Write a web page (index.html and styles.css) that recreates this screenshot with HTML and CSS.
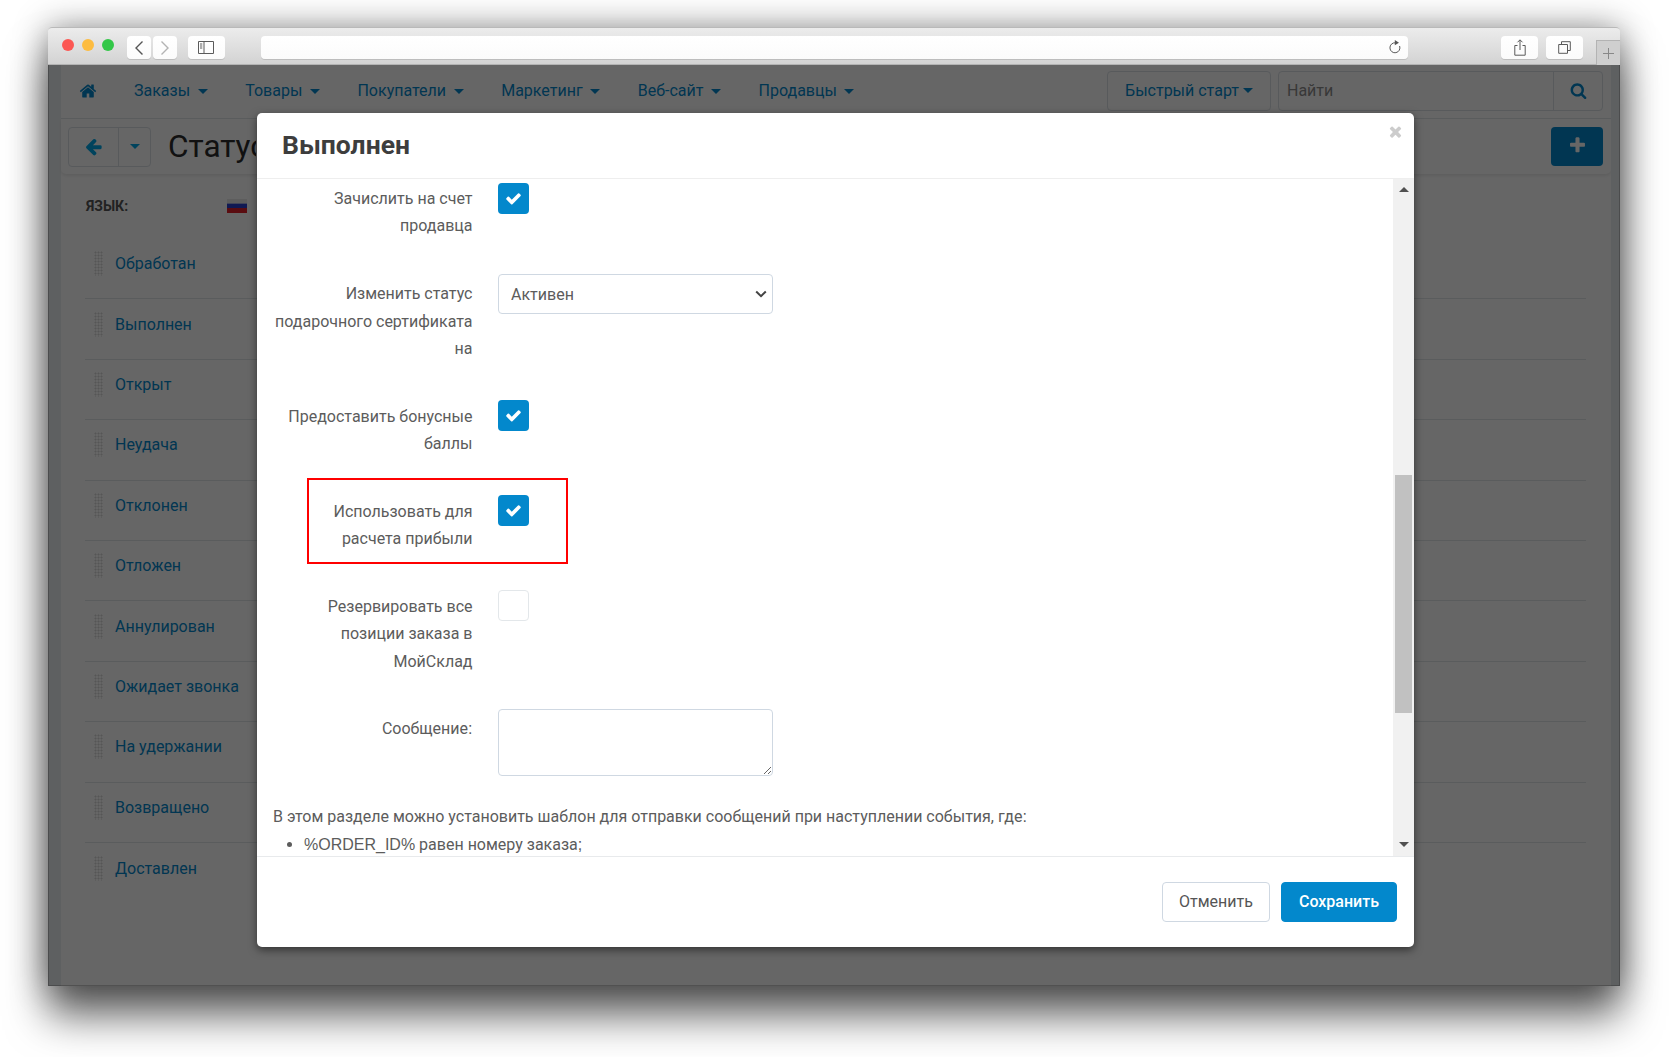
FILE: index.html
```html
<!DOCTYPE html>
<html lang="ru">
<head>
<meta charset="utf-8">
<title>Выполнен</title>
<link rel="stylesheet" href="styles.css">
</head>
<body>
<svg class="defs" width="0" height="0" aria-hidden="true">
  <symbol id="i-home" viewBox="0 0 1792 1792"><path d="M1472 992v480q0 26-19 45t-45 19h-384v-384h-256v384h-384q-26 0-45-19t-19-45v-480q0-1 .5-3t.5-3l575-474 575 474q1 2 1 6zm223-69l-62 74q-8 9-21 11h-3q-13 0-21-7l-692-577-692 577q-12 8-24 7-13-2-21-11l-62-74q-8-10-7-23.5t11-21.5l719-599q32-26 76-26t76 26l244 204v-195q0-14 9-23t23-9h192q14 0 23 9t9 23v408l219 182q10 8 11 21.5t-7 23.5z"/></symbol>
  <symbol id="i-left" viewBox="0 0 1792 1792"><path d="M1664 896v128q0 53-32.5 90.5t-84.5 37.5h-704l293 294q38 36 38 90t-38 90l-75 76q-37 37-90 37-52 0-91-37l-651-652q-37-37-37-90 0-52 37-91l651-650q38-38 91-38 52 0 90 38l75 74q38 38 38 91t-38 91l-293 293h704q52 0 84.5 37.5t32.5 90.5z"/></symbol>
  <symbol id="i-search" viewBox="0 0 1792 1792"><path d="M1216 832q0-185-131.5-316.5t-316.5-131.5-316.5 131.5-131.5 316.5 131.5 316.5 316.5 131.5 316.5-131.5 131.5-316.5zm512 832q0 52-38 90t-90 38q-54 0-90-38l-343-342q-179 124-399 124-143 0-273.5-55.5t-225-150-150-225-55.5-273.5 55.5-273.5 150-225 225-150 273.5-55.5 273.5 55.5 225 150 150 225 55.5 273.5q0 220-124 399l343 343q37 37 37 90z"/></symbol>
  <symbol id="i-plus" viewBox="0 0 1792 1792"><path d="M1600 736v192q0 40-28 68t-68 28h-416v416q0 40-28 68t-68 28h-192q-40 0-68-28t-28-68v-416h-416q-40 0-68-28t-28-68v-192q0-40 28-68t68-28h416v-416q0-40 28-68t68-28h192q40 0 68 28t28 68v416h416q40 0 68 28t28 68z"/></symbol>
  <symbol id="i-close" viewBox="0 0 1792 1792"><path d="M1490 1322q0 40-28 68l-136 136q-28 28-68 28t-68-28l-294-294-294 294q-28 28-68 28t-68-28l-136-136q-28-28-28-68t28-68l294-294-294-294q-28-28-28-68t28-68l136-136q28-28 68-28t68 28l294 294 294-294q28-28 68-28t68 28l136 136q28 28 28 68t-28 68l-294 294 294 294q28 28 28 68z"/></symbol>
  <symbol id="i-check" viewBox="0 0 1792 1792"><path d="M1671 566q0 40-28 68l-724 724-136 136q-28 28-68 28t-68-28l-136-136-362-362q-28-28-28-68t28-68l136-136q28-28 68-28t68 28l294 295 656-657q28-28 68-28t68 28l136 136q28 28 28 68z"/></symbol>
</svg>

<div class="window">
  <header class="toolbar">
    <div class="lights">
      <span class="light light-red"></span>
      <span class="light light-yellow"></span>
      <span class="light light-green"></span>
    </div>
    <div class="nav-buttons">
      <span class="tb-btn tb-nav"><svg width="12" height="16" viewBox="0 0 12 16"><path class="stroke" d="M9.5 1.5 3 8l6.5 6.5"/></svg></span>
      <span class="tb-btn tb-nav"><svg width="12" height="16" viewBox="0 0 12 16"><path class="stroke stroke-light" d="M2.5 1.5 9 8l-6.5 6.5"/></svg></span>
    </div>
    <span class="tb-btn tb-wide tb-sidebar"><svg width="16" height="13" viewBox="0 0 16 13"><path class="stroke stroke-thin" d="M.5.5h15v12H.5zM6 .5v12M2 3h2.300M2 5h2.300M2 7h2.300"/></svg></span>
    <div class="address">
      <svg width="13" height="15" viewBox="0 0 13 15"><path class="stroke stroke-thin" d="M7.500 2.800A5 5 0 1 0 11.600 6"/><path class="fill-dark" d="M6.800 0 11 2.800 6.800 5.200z"/></svg>
    </div>
    <span class="tb-btn tb-wide tb-share"><svg width="12" height="17" viewBox="0 0 12 17"><path class="stroke stroke-thin" d="M3.500 6.500H.8v9.700h10.400V6.500H8.500M6 11V1M3.500 3.300 6 .8l2.500 2.500"/></svg></span>
    <span class="tb-btn tb-wide tb-tabs"><svg width="13" height="13" viewBox="0 0 13 13"><path class="stroke stroke-thin" d="M.7 3.500h8.800v8.800H.7zM3.500 3.300V.7h8.800v8.800H9.700"/></svg></span>
    <span class="new-tab"><svg width="11" height="11" viewBox="0 0 11 11"><path class="stroke stroke-plus" d="M5.500 0v11M0 5.500h11"/></svg></span>
  </header>

  <div class="page">
    <div class="strip strip-left"></div>
    <main class="main">
      <nav class="topnav">
        <svg class="icon home"><use href="#i-home"/></svg>
        <ul class="menu">
          <li>Заказы<i class="caret"></i></li>
          <li>Товары<i class="caret"></i></li>
          <li>Покупатели<i class="caret"></i></li>
          <li>Маркетинг<i class="caret"></i></li>
          <li>Веб-сайт<i class="caret"></i></li>
          <li>Продавцы<i class="caret"></i></li>
        </ul>
        <span class="quick">Быстрый старт<i class="caret caret-tight"></i></span>
        <div class="search">
          <span class="search-text">Найти</span>
          <span class="search-btn"><svg class="icon search-icon"><use href="#i-search"/></svg></span>
        </div>
      </nav>
      <div class="subbar">
        <div class="back-group">
          <span class="back-btn"><svg class="icon back-icon"><use href="#i-left"/></svg></span>
          <span class="back-more"><i class="caret caret-flat"></i></span>
        </div>
        <h1 class="page-title">Статус</h1>
        <span class="add-btn"><svg class="icon add-icon"><use href="#i-plus"/></svg></span>
      </div>
      <div class="lang">
        <span class="lang-label">ЯЗЫК:</span>
        <span class="flag"></span>
      </div>
      <ul class="statuses">
        <li><span class="grip"></span>Обработан</li>
        <li><span class="grip"></span>Выполнен</li>
        <li><span class="grip"></span>Открыт</li>
        <li><span class="grip"></span>Неудача</li>
        <li><span class="grip"></span>Отклонен</li>
        <li><span class="grip"></span>Отложен</li>
        <li><span class="grip"></span>Аннулирован</li>
        <li><span class="grip"></span>Ожидает звонка</li>
        <li><span class="grip"></span>На удержании</li>
        <li><span class="grip"></span>Возвращено</li>
        <li><span class="grip"></span>Доставлен</li>
      </ul>
    </main>
    <div class="strip strip-right"></div>
    <div class="backdrop"></div>
    <section class="modal">
      <div class="modal-head">
        <h2 class="modal-title">Выполнен</h2>
        <svg class="icon close"><use href="#i-close"/></svg>
      </div>
      <div class="modal-body">
        <div class="scroll-content">
          <div class="row row-first">
            <label class="row-label">Зачислить на счет продавца</label>
            <span class="check"><svg class="icon tick"><use href="#i-check"/></svg></span>
          </div>
          <div class="row row-select">
            <label class="row-label row-label-input">Изменить статус подарочного сертификата на</label>
            <select class="field select"><option>Активен</option></select>
          </div>
          <div class="row">
            <label class="row-label">Предоставить бонусные баллы</label>
            <span class="check"><svg class="icon tick"><use href="#i-check"/></svg></span>
          </div>
          <div class="row row-marked">
            <span class="marker"></span>
            <label class="row-label">Использовать для расчета прибыли</label>
            <span class="check"><svg class="icon tick"><use href="#i-check"/></svg></span>
          </div>
          <div class="row row-tall">
            <label class="row-label">Резервировать все позиции заказа в МойСклад</label>
            <span class="check check-off"></span>
          </div>
          <div class="row row-message">
            <label class="row-label row-label-input">Сообщение<span class="latin">:</span></label>
            <textarea class="field textarea"></textarea>
          </div>
          <p class="help">В этом разделе можно установить шаблон для отправки сообщений при наступлении события, где<span class="latin">:</span></p>
          <ul class="help-list">
            <li><span class="latin">%ORDER_ID%</span> равен номеру заказа<span class="latin">;</span></li>
          </ul>
        </div>
        <div class="scrollbar">
          <i class="arrow arrow-up"></i>
          <span class="thumb"></span>
          <i class="arrow arrow-down"></i>
        </div>
      </div>
      <div class="modal-foot">
        <button class="btn btn-cancel" type="button">Отменить</button>
        <button class="btn btn-save" type="button">Сохранить</button>
      </div>
    </section>
  </div>
</div>
</body>
</html>
```
FILE: styles.css
```css
* { box-sizing: border-box; }
html, body { height: 100%; }
body {
  margin: 0;
  background: #fff;
  overflow: hidden;
  font-family: Roboto, "Liberation Sans", sans-serif;
  font-size: 16px;
  color: #555;
}
ul { list-style: none; margin: 0; padding: 0; }
h1, h2, p { margin: 0; font-weight: normal; }
.defs { position: absolute; }
.icon { display: block; fill: currentColor; }
.latin { font-family: "Liberation Sans", Arial, sans-serif; }

.window {
  position: relative;
  width: 1572px;
  height: 959px;
  margin: 27px 0 0 48px;
  border-radius: 4px 4px 0 0;
  box-shadow: 0 30px 42px rgba(0,0,0,.6), 0 0 34px rgba(0,0,0,.42);
  display: flex;
  flex-direction: column;
}

/* Browser chrome */
.toolbar {
  flex: none;
  height: 38px;
  display: flex;
  align-items: flex-start;
  padding-top: 8px;
  background: linear-gradient(#ececec, #d3d3d3);
  border-top: 1px solid #b9b9b9;
  border-bottom: 1px solid #b3b3b3;
  border-radius: 4px 4px 0 0;
}
.lights { display: flex; gap: 8px; margin: 3px 0 0 14px; }
.light { width: 12px; height: 12px; border-radius: 50%; }
.light-red { background: #fc5753; }
.light-yellow { background: #fdbc40; }
.light-green { background: #33c748; }
.nav-buttons { display: flex; gap: 2px; margin-left: 13px; }
.tb-btn {
  height: 23px;
  display: flex;
  align-items: center;
  justify-content: center;
  background: linear-gradient(#fff, #fbfbfb);
  border-radius: 4px;
  box-shadow: 0 1px 0 #bdbdbd;
}
.tb-nav { width: 24px; }
.tb-wide { width: 37px; }
.tb-sidebar { margin-left: 11px; }
.address {
  width: 1150px;
  height: 23px;
  margin-left: 36px;
  padding-right: 7px;
  display: flex;
  align-items: center;
  justify-content: flex-end;
  background: linear-gradient(#fff, #fbfbfb);
  border-radius: 4px;
  box-shadow: 0 1px 0 #bdbdbd;
}
.tb-share { margin-left: 93px; }
.tb-tabs { margin-left: 8px; }
.new-tab {
  width: 24px;
  height: 25px;
  margin: 4px 0 0 13px;
  display: flex;
  align-items: center;
  justify-content: center;
  background: #cfcfcf;
  border: 1px solid #b3b3b3;
  border-width: 1px 0 0 1px;
}
.stroke { fill: none; stroke: #555; stroke-width: 1.4; }
.stroke-light { stroke: #b3b3b3; }
.stroke-thin { stroke-width: 1; stroke: #5a5a5a; }
.stroke-plus { stroke: #888; stroke-width: 1; }
.fill-dark { fill: #555; }

/* Page below the modal */
.page {
  position: relative;
  flex: 1;
  display: flex;
  min-height: 0;
  background: #fff;
}
.strip { flex: none; background: #ecf0f2; }
.strip-left { width: 13px; }
.strip-right { width: 9px; }
.main { flex: 1; min-width: 0; color: #0388cc; }

.caret {
  display: inline-block;
  width: 0;
  height: 0;
  margin-left: 7.5px;
  vertical-align: 2px;
  border-top: 5px solid currentColor;
  border-left: 5px solid transparent;
  border-right: 5px solid transparent;
}
.caret-tight { margin-left: 4px; }
.caret-flat { margin: 0; vertical-align: middle; }

.topnav {
  height: 54px;
  display: flex;
  align-items: center;
  padding: 0 8px 2px 18px;
  border-bottom: 1px solid #e2e6e9;
  background: #fff;
}
.home { width: 18px; height: 18px; }
.menu { display: flex; gap: 37.6px; margin-left: 37px; flex: 1; }
.quick {
  width: 164px;
  height: 40px;
  display: flex;
  align-items: center;
  justify-content: center;
  border: 1px solid #dbe1e6;
  border-radius: 4px;
}
.search {
  width: 325px;
  height: 40px;
  margin-left: 7px;
  display: flex;
  align-items: center;
  border: 1px solid #dbe1e6;
  border-radius: 4px;
}
.search-text { flex: 1; padding-left: 8px; color: #8c8c8c; }
.search-btn {
  width: 49px;
  height: 100%;
  display: flex;
  align-items: center;
  justify-content: center;
  border-left: 1px solid #dbe1e6;
}
.search-icon { width: 17px; height: 17px; }

.subbar {
  height: 55px;
  display: flex;
  align-items: center;
  padding: 0 8px 0 7px;
  border-radius: 0 0 5px 5px;
  box-shadow: 0 2px 3px rgba(0,0,0,.08);
  background: #fff;
}
.back-group {
  width: 83px;
  height: 40px;
  display: flex;
  border: 1px solid #dbe1e6;
  border-radius: 4px;
}
.back-btn {
  width: 50px;
  display: flex;
  align-items: center;
  justify-content: center;
  border-right: 1px solid #dbe1e6;
  color: #02a9e8;
}
.back-icon { width: 19px; height: 19px; }
.back-more {
  flex: 1;
  display: flex;
  align-items: center;
  justify-content: center;
  color: #02a9e8;
}
.page-title {
  flex: none;
  width: 88px;
  margin: 0 auto 0 17px;
  font-size: 31.5px;
  color: #2c2c2c;
  white-space: nowrap;
  overflow: hidden;
}
.add-btn {
  width: 52px;
  height: 39px;
  padding-bottom: 2px;
  display: flex;
  align-items: center;
  justify-content: center;
  background: #0388cc;
  border-radius: 4px;
  color: #fff;
}
.add-icon { width: 19px; height: 19px; }

.lang {
  height: 65px;
  display: flex;
  align-items: center;
  padding: 0 0 2px 25px;
}
.lang-label { width: 141px; font-size: 14px; font-weight: 700; color: #555; }
.flag {
  width: 20px;
  height: 14px;
  background: linear-gradient(#e8e8e8 30%, #2a3fd0 36% 62%, #e0202a 68%);
}
.statuses { padding: 0 25px 0 24px; }
.statuses li {
  height: 60.4px;
  padding-bottom: 10px;
  display: flex;
  align-items: center;
  border-bottom: 1px solid #e2e6e9;
}
.statuses li:last-child { border-bottom: 0; }
.grip {
  width: 9px;
  height: 25px;
  margin: 0 12px 0 9px;
  background-image: radial-gradient(circle, #d6d6d6 .9px, transparent 1.1px);
  background-size: 3px 3px;
}

/* Dim layer and modal */
.backdrop {
  position: absolute;
  inset: 0;
  background: rgba(0,0,0,.6);
  border: solid rgba(0,0,0,.2);
  border-width: 0 1px 1px;
}
.modal {
  position: absolute;
  left: 209px;
  top: 48px;
  width: 1157px;
  height: 834px;
  display: flex;
  flex-direction: column;
  background: #fff;
  border-radius: 5px;
  box-shadow: 0 3px 9px rgba(0,0,0,.5);
  color: #5c5c5c;
}
.modal-head {
  position: relative;
  flex: none;
  height: 66px;
  display: flex;
  align-items: center;
  padding: 0 0 2px 25px;
  border-bottom: 1px solid #eee;
}
.modal-title { font-size: 26.5px; font-weight: 700; color: #3d3d3d; }
.close { position: absolute; right: 10px; top: 10px; width: 17px; height: 17px; color: #ccc; }
.modal-body { flex: 1; min-height: 0; display: flex; }
.scroll-content { flex: 1; min-width: 0; overflow: hidden; padding-top: 4px; line-height: 27.7px; }
.row { position: relative; display: flex; height: 95px; }
.row-first { height: 91px; }
.row-select { height: 126px; }
.row-tall { height: 119px; }
.row-message { height: 94px; }
.row-label { width: 215.5px; padding: 2.5px 0 0 15px; text-align: right; }
.row-first .row-label { padding-top: 1.5px; }
.row-label-input { padding-top: 6px; }
.check {
  flex: none;
  width: 31px;
  height: 31px;
  margin-left: 25.5px;
  display: flex;
  align-items: center;
  justify-content: center;
  background: #0388cc;
  border-radius: 4px;
  color: #fff;
}
.check-off { background: #fff; border: 1px solid #e3e7ea; }
.tick { width: 17px; height: 17px; }
.field {
  flex: none;
  width: 274.5px;
  margin-left: 25.5px;
  border: 1px solid #cfd8e2;
  border-radius: 4px;
  background-color: #fff;
  color: #5c5c5c;
  font: inherit;
}
.select {
  height: 40px;
  padding: 2px 12px 0;
  appearance: none;
  background-image: url("data:image/svg+xml,%3Csvg xmlns='http://www.w3.org/2000/svg' width='12' height='8' viewBox='0 0 12 8'%3E%3Cpath d='M1.200 1.500 6 6.200l4.800-4.700' fill='none' stroke='%23444' stroke-width='2'/%3E%3C/svg%3E");
  background-repeat: no-repeat;
  background-position: right 5px center;
}
.textarea { height: 67px; display: block; padding: 6px 12px; }
.marker {
  position: absolute;
  left: 50px;
  top: -17px;
  width: 261px;
  height: 86px;
  border: 2px solid #f00;
  pointer-events: none;
}
.help { padding-left: 16px; white-space: nowrap; }
.help-list { padding-left: 47px; list-style: disc; }

.scrollbar {
  flex: none;
  position: relative;
  width: 21px;
  background: #f1f1f1;
}
.thumb { position: absolute; left: 2px; top: 296px; width: 17px; height: 238px; background: #c1c1c1; }
.arrow { position: absolute; left: 5.500px; width: 0; height: 0; border-left: 5px solid transparent; border-right: 5px solid transparent; }
.arrow-up { top: 8px; border-bottom: 5px solid #505050; }
.arrow-down { bottom: 9px; border-top: 5px solid #505050; }

.modal-foot {
  flex: none;
  height: 91px;
  display: flex;
  justify-content: flex-end;
  align-items: flex-start;
  gap: 11px;
  padding: 25px 17px 0 0;
  border-top: 1px solid #e8eaec;
}
.btn {
  height: 40px;
  padding: 0 0 2px;
  border-radius: 4px;
  font: inherit;
  border: 1px solid #cfd8e2;
  background: #fff;
  color: #555;
}
.btn-cancel { width: 108px; }
.btn-save { width: 116px; background: #0388cc; border-color: #0388cc; color: #fff; font-weight: 500; }
```
